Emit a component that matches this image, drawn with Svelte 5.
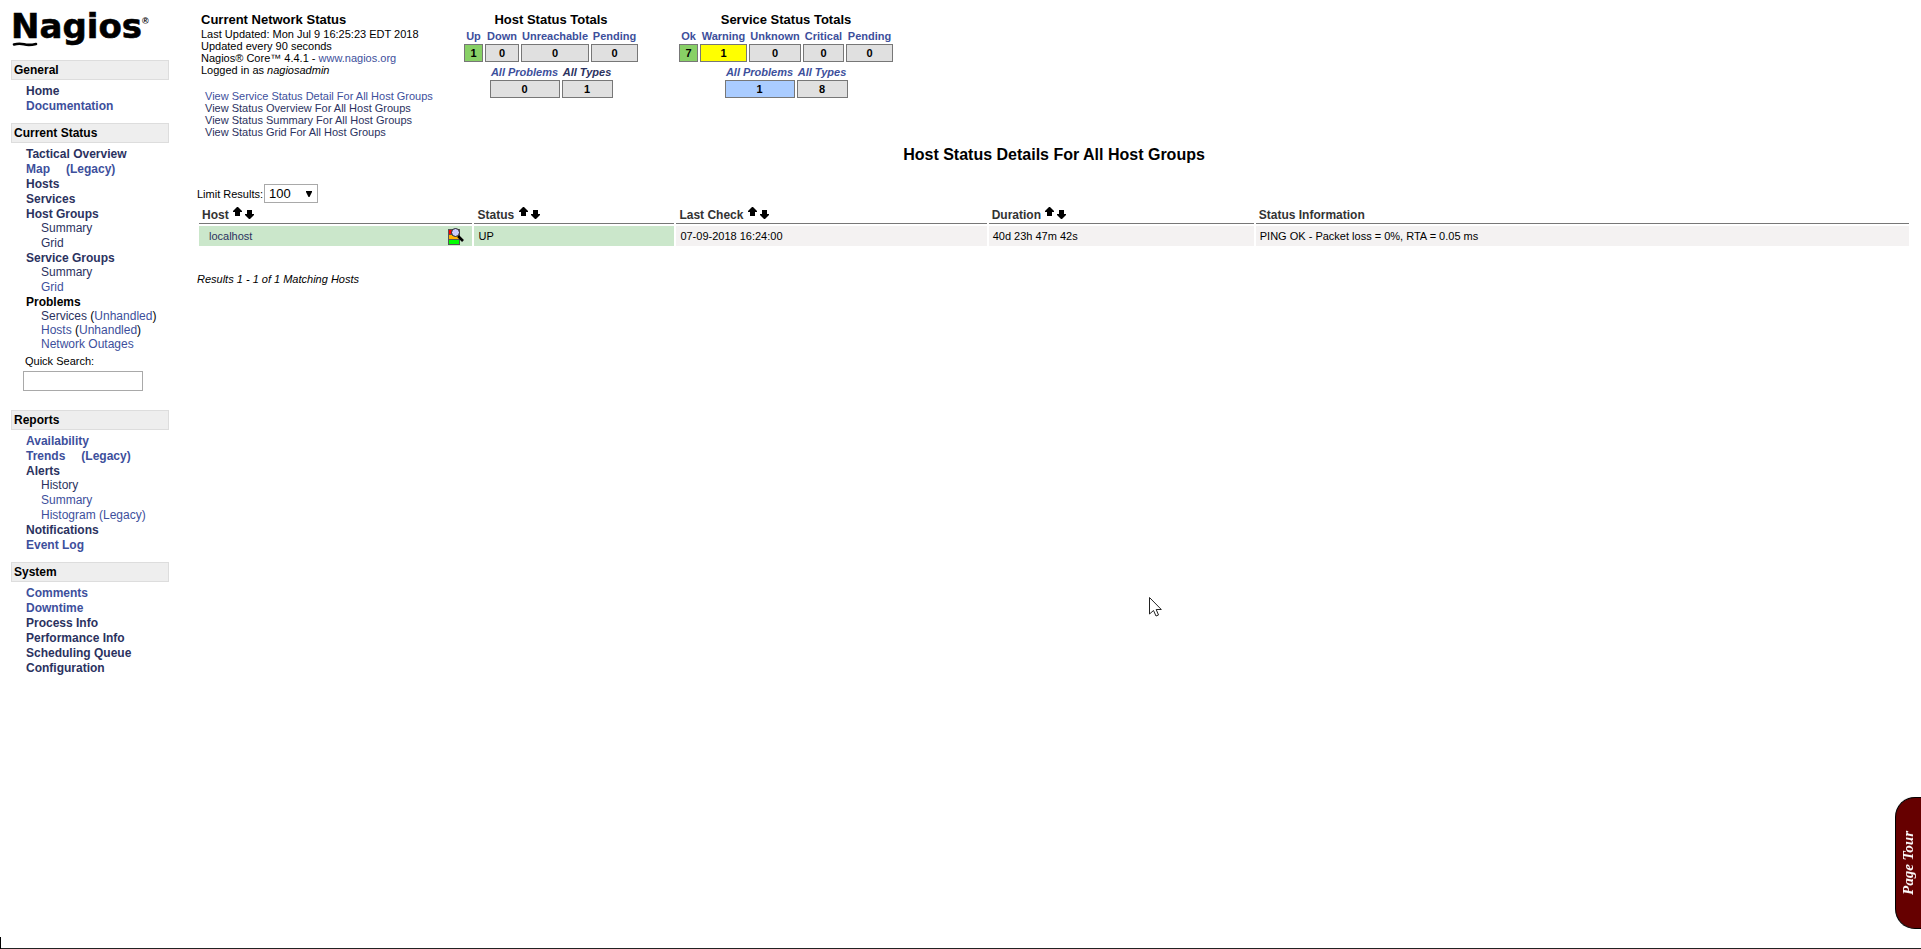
<script lang="ts">
	type Link = { text: string; visited?: boolean };
	type Item = { links: Link[]; kind?: 'group' | 'sub' | 'tight'; heading?: boolean };
	type Total = { label: string; value: number; width: number; state?: string; visited?: boolean };

	const item = (text: string, visited = false, kind?: Item['kind']): Item => ({ links: [{ text, visited }], kind });

	const general: Item[] = [item('Home', true), item('Documentation')];

	const current: Item[] = [
		item('Tactical Overview', true),
		{ links: [{ text: 'Map' }, { text: '(Legacy)' }] },
		item('Hosts', true),
		item('Services', true),
		item('Host Groups', true, 'group'),
		item('Summary', true, 'sub'),
		item('Grid', true, 'sub'),
		item('Service Groups', true, 'group'),
		item('Summary', true, 'sub'),
		item('Grid', false, 'sub'),
		{ links: [{ text: 'Problems' }], kind: 'group', heading: true },
		{ links: [{ text: 'Services', visited: true }, { text: 'Unhandled' }], kind: 'tight' },
		{ links: [{ text: 'Hosts' }, { text: 'Unhandled' }], kind: 'tight' },
		item('Network Outages', false, 'tight')
	];

	const reports: Item[] = [
		item('Availability'),
		{ links: [{ text: 'Trends' }, { text: '(Legacy)' }] },
		item('Alerts', true, 'group'),
		item('History', true, 'sub'),
		item('Summary', false, 'sub'),
		item('Histogram (Legacy)', false, 'sub'),
		item('Notifications', true),
		item('Event Log')
	];

	const system: Item[] = [
		item('Comments'),
		item('Downtime'),
		item('Process Info', true),
		item('Performance Info', true),
		item('Scheduling Queue', true),
		item('Configuration', true)
	];

	const sections = [
		{ title: 'General', items: general },
		{ title: 'Current Status', items: current, search: true },
		{ title: 'Reports', items: reports },
		{ title: 'System', items: system }
	];

	const totals: { title: string; states: Total[]; sums: Total[] }[] = [
		{
			title: 'Host Status Totals',
			states: [
				{ label: 'Up', value: 1, width: 19, state: 'ok' },
				{ label: 'Down', value: 0, width: 34 },
				{ label: 'Unreachable', value: 0, width: 68 },
				{ label: 'Pending', value: 0, width: 47 }
			],
			sums: [
				{ label: 'All Problems', value: 0, width: 70 },
				{ label: 'All Types', value: 1, width: 51, visited: true }
			]
		},
		{
			title: 'Service Status Totals',
			states: [
				{ label: 'Ok', value: 7, width: 19, state: 'ok' },
				{ label: 'Warning', value: 1, width: 47, state: 'warning' },
				{ label: 'Unknown', value: 0, width: 52 },
				{ label: 'Critical', value: 0, width: 41 },
				{ label: 'Pending', value: 0, width: 47 }
			],
			sums: [
				{ label: 'All Problems', value: 1, width: 70, state: 'problems' },
				{ label: 'All Types', value: 8, width: 51 }
			]
		}
	];

	const views: Link[] = [
		{ text: 'View Service Status Detail For All Host Groups' },
		{ text: 'View Status Overview For All Host Groups', visited: true },
		{ text: 'View Status Summary For All Host Groups', visited: true },
		{ text: 'View Status Grid For All Host Groups', visited: true }
	];

	const columns = [
		{ name: 'Host', width: 16, sortable: true },
		{ name: 'Status', width: 11.6, sortable: true },
		{ name: 'Last Check', width: 18.2, sortable: true },
		{ name: 'Duration', width: 15.5, sortable: true },
		{ name: 'Status Information', width: 38.7, sortable: false }
	];

	let search = $state('');
	let limit = $state('100');
</script>

{#snippet totalsTable(cells: Total[], sum: boolean)}
	<table class="totals" class:sum>
		<thead>
			<tr>
				{#each cells as cell}
					<th style="width: {cell.width}px"><a href="#top" class:visited={cell.visited}>{cell.label}</a></th>
				{/each}
			</tr>
		</thead>
		<tbody>
			<tr>
				{#each cells as cell}
					<td class={cell.state}>{cell.value}</td>
				{/each}
			</tr>
		</tbody>
	</table>
{/snippet}

<div class="page">
	<nav class="side">
		<a class="logo" href="#top" aria-label="Nagios">
			<svg width="140" height="38" viewBox="0 0 140 38">
				<text x="0" y="26" class="word">Nagios</text>
				<text x="131" y="12" class="reg">®</text>
				<path d="M3 32.5Q8 31 13 32.3T25 32" fill="none" stroke="#000" stroke-width="2.6" stroke-linecap="round" />
			</svg>
		</a>

		{#each sections as section}
			<section>
				<h2>{section.title}</h2>
				<ul>
					{#each section.items as entry}
						<li class={entry.kind}>
							{#if entry.heading}
								{entry.links[0].text}
							{:else if entry.kind === 'tight' && entry.links.length > 1}
								<a href="#top" class:visited={entry.links[0].visited}>{entry.links[0].text}</a>
								(<a href="#top">{entry.links[1].text}</a>)
							{:else}
								{#each entry.links as link}
									<a href="#top" class:visited={link.visited}>{link.text}</a>
								{/each}
							{/if}
						</li>
					{/each}
				</ul>
				{#if section.search}
					<form class="search">
						<label for="search">Quick Search:</label>
						<input id="search" type="text" bind:value={search} />
					</form>
				{/if}
			</section>
		{/each}
	</nav>

	<main>
		<header>
			<div class="info">
				<h3>Current Network Status</h3>
				<p>Last Updated: Mon Jul 9 16:25:23 EDT 2018</p>
				<p>Updated every 90 seconds</p>
				<p>Nagios® Core™ 4.4.1 - <a href="#top">www.nagios.org</a></p>
				<p>Logged in as <i>nagiosadmin</i></p>
				<ul>
					{#each views as view}
						<li><a href="#top" class:visited={view.visited}>{view.text}</a></li>
					{/each}
				</ul>
			</div>
			{#each totals as group}
				<div class="group-totals">
					<h3>{group.title}</h3>
					{@render totalsTable(group.states, false)}
					{@render totalsTable(group.sums, true)}
				</div>
			{/each}
		</header>

		<h1>Host Status Details For All Host Groups</h1>

		<div class="limit">
			<label for="limit">Limit Results:</label>
			<span class="select">
				<select id="limit" bind:value={limit}>
					<option value="50">50</option>
					<option value="100">100</option>
					<option value="250">250</option>
					<option value="1000">1000</option>
				</select>
				<svg width="6" height="6" viewBox="0 0 6 6"><path d="M0 0H6V1L3.5 6H2.5L0 1Z" /></svg>
			</span>
		</div>

		<table class="status">
			<thead>
				<tr>
					{#each columns as column}
						<th style="width: {column.width}%">
							{column.name}
							{#if column.sortable}
								<a class="sort" href="#top" aria-label="Sort by {column.name}">
									<svg width="21" height="12" viewBox="0 0 21 12">
										<path d="M4 0H5L9 4V5H7V9H2V5H0V4Z" />
										<path d="M14 3H19V7H21V8L17 12H16L12 8V7H14Z" />
									</svg>
								</a>
							{/if}
						</th>
					{/each}
				</tr>
			</thead>
			<tbody>
				<tr>
					<td class="up">
						<div class="host">
							<a class="visited" href="#top">localhost</a>
							<a class="detail" href="#top" aria-label="View service details for this host">
								<svg width="16" height="17" viewBox="0 0 16 17">
									<rect x="0.5" y="1.5" width="11" height="15" fill="#ffb400" stroke="#555" />
									<rect x="1" y="2" width="10" height="5" fill="#f00" />
									<rect x="1" y="12" width="10" height="4" fill="#0f0" />
									<path d="M0 6.5H12M0 11.5H12" stroke="#555" />
									<path d="M10 8L15 13" stroke="#000" stroke-width="2.6" />
									<circle cx="7.5" cy="4.5" r="4" fill="#ccccff" stroke="#222" />
								</svg>
							</a>
						</div>
					</td>
					<td class="up">UP</td>
					<td>07-09-2018 16:24:00</td>
					<td>40d 23h 47m 42s</td>
					<td>PING OK - Packet loss = 0%, RTA = 0.05 ms</td>
				</tr>
			</tbody>
		</table>

		<p class="results">Results 1 - 1 of 1 Matching Hosts</p>
	</main>

	<button class="tour">Page Tour</button>

	<svg class="cursor" width="13" height="20" viewBox="0 0 13 20" aria-hidden="true">
		<path d="M0.5 0.5V17L4.5 13.5L7 19L9.5 18L7.2 12.5H12.3Z" fill="#fff" stroke="#222" />
	</svg>
</div>

<style>
	:global(body) {
		background: #fff;
	}

	.page {
		display: flex;
		box-sizing: border-box;
		min-height: 100vh;
		border-bottom: 1px solid #222;
		font-family: 'Liberation Sans', Arial, sans-serif;
		font-size: 11px;
		line-height: 12px;
		color: #000;
	}

	/* corner tick of the frame edge */
	.page::after {
		content: '';
		position: fixed;
		left: 0;
		bottom: 0;
		width: 1px;
		height: 12px;
		background: #000;
	}

	h1,
	h2,
	h3,
	p,
	ul {
		margin: 0;
		padding: 0;
		list-style: none;
	}

	a {
		color: #3d4f9c;
		text-decoration: none;
	}

	a.visited {
		color: #2b3260;
	}

	/* sidebar */
	.side {
		flex: none;
		box-sizing: border-box;
		width: 197px;
		padding: 12px 28px 0 11px;
	}

	.logo {
		display: block;
		height: 48px;
	}

	.logo svg {
		display: block;
		overflow: visible;
	}

	.word {
		font: bold 34px 'DejaVu Sans', sans-serif;
		stroke: #000;
		stroke-width: 0.6px;
	}

	.reg {
		font: bold 9px 'Liberation Sans', sans-serif;
	}

	section {
		padding-bottom: 9px;
	}

	h2 {
		box-sizing: border-box;
		height: 20px;
		margin-bottom: 4px;
		padding-left: 2px;
		border: 1px solid #ddd;
		background: #eee;
		font-size: 12px;
		line-height: 18px;
	}

	.side li {
		padding-left: 15px;
		font-size: 12px;
		font-weight: bold;
		line-height: 15px;
	}

	.side li a + a {
		margin-left: 16px;
	}

	.side li.group {
		line-height: 14px;
	}

	.side li.sub,
	.side li.tight {
		padding-left: 30px;
		font-weight: normal;
	}

	.side li.tight {
		line-height: 14px;
	}

	.side li.tight a + a {
		margin-left: 0;
	}

	.search {
		display: flex;
		flex-direction: column;
		gap: 4px;
		padding: 4px 0 10px 12px;
	}

	.search label {
		padding-left: 2px;
	}

	.search input {
		box-sizing: border-box;
		width: 120px;
		height: 20px;
		border: 1px solid #a9a9a9;
		background: #fff;
	}

	/* content */
	main {
		flex: 1;
		padding: 12px 10px 0 0;
	}

	header {
		display: flex;
		align-items: flex-start;
		height: 134px;
	}

	.info {
		width: 261px;
		padding-left: 4px;
	}

	h3 {
		font-size: 13px;
		line-height: 16px;
	}

	.info ul {
		padding: 14px 0 0 4px;
	}

	.group-totals {
		margin-right: 37px;
	}

	.group-totals h3 {
		text-align: center;
	}

	.totals {
		margin: 0 auto;
		border-spacing: 2px;
		table-layout: fixed;
		font-size: 11px;
		text-align: center;
	}

	.totals th {
		height: 12px;
		padding: 0;
		white-space: nowrap;
	}

	.totals.sum th {
		font-style: italic;
	}

	.totals td {
		box-sizing: border-box;
		height: 18px;
		padding: 0;
		border: 1px solid #777;
		background: #e0e0e0;
		font-weight: bold;
	}

	.totals td.ok {
		background: #88d066;
	}

	.totals td.warning {
		background: #ff0;
	}

	.totals td.problems {
		background: #aaccff;
	}

	h1 {
		font-size: 16px;
		line-height: 18px;
		text-align: center;
	}

	.limit {
		display: flex;
		align-items: center;
		gap: 1px;
		padding-top: 20px;
	}

	.select {
		display: grid;
		align-items: center;
	}

	.select > * {
		grid-area: 1 / 1;
	}

	.select svg {
		justify-self: end;
		margin-right: 6px;
		pointer-events: none;
	}

	select {
		appearance: none;
		width: 54px;
		height: 19px;
		padding: 0 4px;
		border: 1px solid #a9a9a9;
		border-radius: 0;
		background: #fff;
		color: #000;
		font: 13px 'Liberation Sans', Arial, sans-serif;
		line-height: 17px;
	}

	.status {
		width: 100%;
		border-spacing: 2px;
		table-layout: fixed;
	}

	.status th {
		height: 15px;
		padding: 2px 3px 0;
		border-bottom: 1px solid #777;
		color: #333;
		font-size: 12px;
		line-height: 15px;
		text-align: left;
	}

	.sort {
		padding-left: 1px;
	}

	.sort svg {
		vertical-align: 0;
	}

	.status td {
		height: 20px;
		padding: 0 4px;
		background: #f4f2f2;
	}

	.status td.up {
		background: #cbe7cb;
	}

	.host {
		display: flex;
		align-items: center;
		justify-content: space-between;
		padding: 0 4px 0 6px;
	}

	.detail svg {
		display: block;
	}

	.results {
		padding-top: 25px;
		font-style: italic;
	}

	.tour {
		position: fixed;
		right: 0;
		bottom: 20px;
		box-sizing: border-box;
		width: 26px;
		height: 132px;
		padding: 0;
		border: 1px solid #000;
		border-left: none;
		border-radius: 0 20px 20px 0;
		background: #600;
		color: #fff;
		font: italic bold 15px 'Liberation Serif', serif;
		writing-mode: vertical-rl;
		rotate: 180deg;
	}

	.cursor {
		position: fixed;
		left: 1149px;
		top: 597px;
		pointer-events: none;
	}
</style>
